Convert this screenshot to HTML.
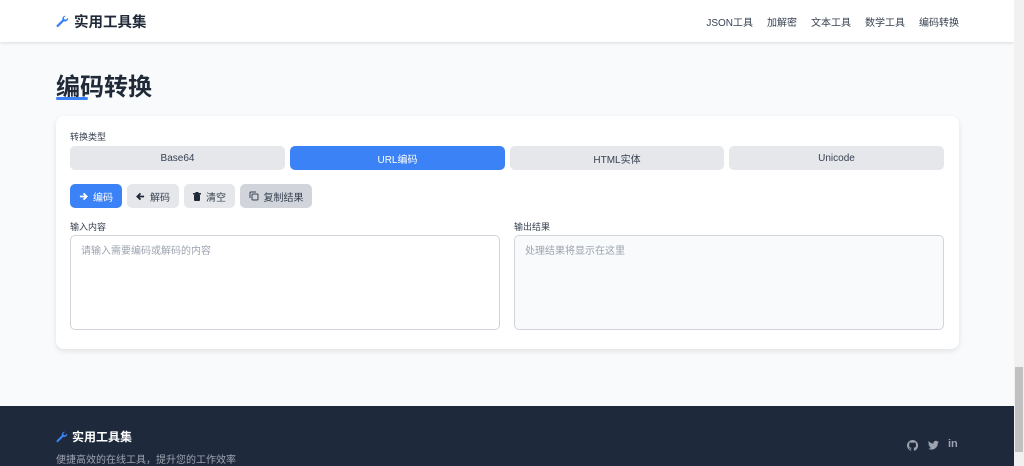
<!DOCTYPE html><html><head><meta charset="utf-8"><style>
*{box-sizing:border-box;margin:0;padding:0}
body{width:1024px;height:466px;overflow:hidden;background:#f8fafc;font-family:"Liberation Sans","Noto Sans CJK SC",sans-serif;position:relative;color:#1f2937}
.nav{position:absolute;left:0;top:0;width:1014px;height:42px;background:#fff;box-shadow:0 1px 3px rgba(0,0,0,.12)}
.logo{position:absolute;left:56px;top:11px;font-size:14.5px;font-weight:bold;color:#1f2937;display:flex;align-items:center;gap:5px}
.links{position:absolute;right:55px;top:14px;font-size:10px;color:#374151;display:flex;gap:14px}
h1{position:absolute;left:56px;top:67px;font-size:24px;font-weight:bold;color:#1f2937}
.ul{position:absolute;left:56px;top:97px;width:32px;height:3px;background:#3b82f6;border-radius:2px}
.card{position:absolute;left:56px;top:116px;width:903px;height:233px;background:#fff;border-radius:8px;box-shadow:0 2px 6px rgba(0,0,0,.1)}
.lbl{position:absolute;font-size:9px;color:#374151}
.tab{position:absolute;top:30px;height:24px;border-radius:5px;background:#e5e7eb;font-size:10px;color:#374151;display:flex;align-items:center;justify-content:center}
.tab.a{background:#3b82f6;color:#fff}
.btn{position:absolute;top:68px;height:24px;border-radius:5px;background:#e5e7eb;font-size:10px;color:#374151;display:flex;align-items:center;justify-content:center;gap:5px}
.ta{position:absolute;top:119px;width:430px;height:95px;border:1px solid #d1d5db;border-radius:5px;font-size:10px;color:#9ca3af;padding:6px 10px}
.foot{position:absolute;left:0;top:406px;width:1014px;height:60px;background:#1e293b}
.sb{position:absolute;left:1014px;top:0;width:10px;height:466px;background:#f1f1f1}
.th{position:absolute;left:1015px;top:367px;width:8px;height:85px;background:#c1c1c1}
</style></head><body>
<div class="nav">
<div class="logo"><svg width="13" height="13" viewBox="0 0 16 16"><path d="M15 4a4 4 0 0 1-5.3 3.8L3 14.5a1.4 1.4 0 0 1-2-2l6.7-6.7A4 4 0 0 1 12 1l-2.3 2.3.5 2 2 .5L14.5 3.5c.3.2.5.3.5.5z" fill="#3b82f6"/></svg>实用工具集</div>
<div class="links"><span>JSON工具</span><span>加解密</span><span>文本工具</span><span>数学工具</span><span>编码转换</span></div>
</div>
<h1>编码转换</h1><div class="ul"></div>
<div class="card">
<div class="lbl" style="left:14px;top:14px">转换类型</div>
<div class="tab" style="left:14px;width:215px">Base64</div>
<div class="tab a" style="left:234px;width:215px">URL编码</div>
<div class="tab" style="left:454px;width:214px">HTML实体</div>
<div class="tab" style="left:673px;width:215px">Unicode</div>
<div class="btn" style="left:14px;width:52px;background:#3b82f6;color:#fff"><svg width="9" height="9" viewBox="0 0 10 10"><path d="M1 5h7M5 1.5 8.5 5 5 8.5" stroke="#fff" stroke-width="2" fill="none"/></svg>编码</div>
<div class="btn" style="left:71px;width:52px"><svg width="9" height="9" viewBox="0 0 10 10"><path d="M9 5H2M5 1.5 1.5 5 5 8.5" stroke="#1f2937" stroke-width="2" fill="none"/></svg>解码</div>
<div class="btn" style="left:128px;width:51px"><svg width="8" height="9" viewBox="0 0 8 9"><rect x="0" y="1" width="8" height="1.5" fill="#1f2937"/><rect x="1" y="2.5" width="6" height="6.5" rx="1" fill="#1f2937"/><rect x="2.5" y="0" width="3" height="1.2" fill="#1f2937"/></svg>清空</div>
<div class="btn" style="left:184px;width:72px;background:#d1d5db"><svg width="10" height="10" viewBox="0 0 10 10"><rect x="3" y="3" width="6" height="6" rx="1" stroke="#374151" fill="none"/><path d="M1 7V2a1 1 0 0 1 1-1h5" stroke="#374151" fill="none"/></svg>复制结果</div>
<div class="lbl" style="left:14px;top:104px">输入内容</div>
<div class="lbl" style="left:458px;top:104px">输出结果</div>
<div class="ta" style="left:14px">请输入需要编码或解码的内容</div>
<div class="ta" style="left:458px;background:#f9fafb">处理结果将显示在这里</div>
</div>
<div class="foot">
<div style="position:absolute;left:56px;top:22px;font-size:12px;font-weight:bold;color:#fff;display:flex;align-items:center;gap:4px"><svg width="12" height="12" viewBox="0 0 16 16"><path d="M15 4a4 4 0 0 1-5.3 3.8L3 14.5a1.4 1.4 0 0 1-2-2l6.7-6.7A4 4 0 0 1 12 1l-2.3 2.3.5 2 2 .5L14.5 3.5c.3.2.5.3.5.5z" fill="#3b82f6"/></svg>实用工具集</div>
<div style="position:absolute;left:56px;top:45px;font-size:10px;color:#9ca3af">便捷高效的在线工具，提升您的工作效率</div>
<svg style="position:absolute;left:907px;top:34px" width="11" height="11" viewBox="0 0 16 16"><path fill="#9ca3af" d="M8 0a8 8 0 0 0-2.5 15.6c.4 0 .5-.2.5-.4v-1.4c-2.2.5-2.7-1-2.7-1-.4-.9-.9-1.2-.9-1.2-.7-.5.1-.5.1-.5.8.1 1.2.8 1.2.8.7 1.3 1.9.9 2.4.7.1-.5.3-.9.5-1.1-1.8-.2-3.6-.9-3.6-4 0-.9.3-1.6.8-2.1-.1-.2-.4-1 .1-2.1 0 0 .7-.2 2.2.8a7.5 7.5 0 0 1 4 0c1.5-1 2.2-.8 2.2-.8.4 1.1.2 1.9.1 2.1.5.6.8 1.3.8 2.1 0 3.1-1.9 3.8-3.6 4 .3.3.5.8.5 1.5v2.2c0 .2.1.5.6.4A8 8 0 0 0 8 0z"/></svg>
<svg style="position:absolute;left:928px;top:34px" width="11" height="11" viewBox="0 0 16 14"><path fill="#9ca3af" d="M16 1.7a6.6 6.6 0 0 1-1.9.5A3.3 3.3 0 0 0 15.6.4a6.6 6.6 0 0 1-2.1.8A3.3 3.3 0 0 0 7.9 4.2 9.3 9.3 0 0 1 1.1.7a3.3 3.3 0 0 0 1 4.4 3.3 3.3 0 0 1-1.5-.4 3.3 3.3 0 0 0 2.6 3.2 3.3 3.3 0 0 1-1.5.1 3.3 3.3 0 0 0 3.1 2.3A6.6 6.6 0 0 1 0 11.6 9.3 9.3 0 0 0 5 13c6 0 9.3-5 9.3-9.3v-.4A6.7 6.7 0 0 0 16 1.7z"/></svg>
<div style="position:absolute;left:948px;top:32px;font-size:11px;font-weight:bold;color:#9ca3af">in</div>
</div>
<div class="sb"></div><div class="th"></div>
</body></html>
